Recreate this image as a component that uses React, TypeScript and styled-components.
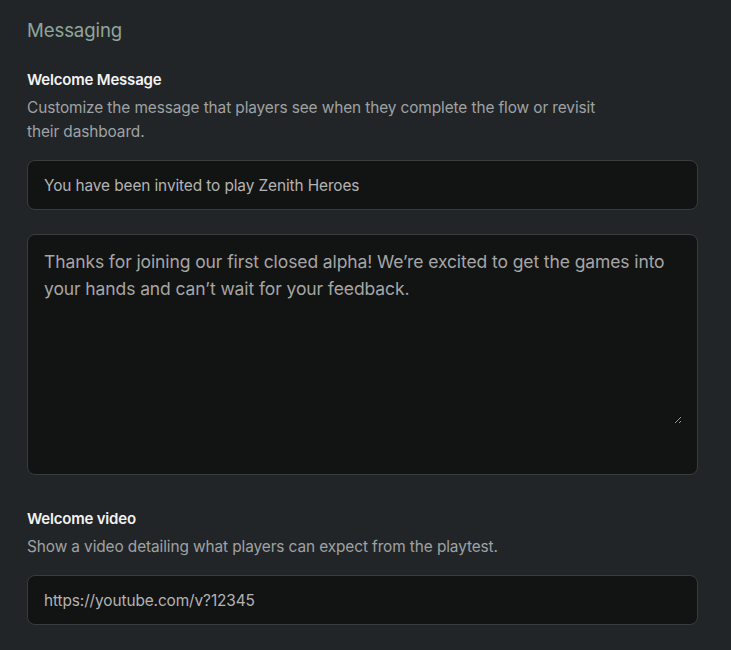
import React from "react";
import styled, { createGlobalStyle } from "styled-components";

const Global = createGlobalStyle`
  html, body { margin: 0; padding: 0; background: #222527; }
  body { font-family: Inter, "Noto Sans", sans-serif; -webkit-font-smoothing: antialiased; }
  * { box-sizing: border-box; }
`;

const Page = styled.div`
  width: 731px;
  min-height: 650px;
  background: #222527;
  padding: 18px 33px 0 27px;
  display: flex;
  flex-direction: column;
`;

const Heading = styled.h2`
  margin: 0;
  font-size: 18.6px;
  font-weight: 400;
  line-height: 24px;
  color: #8fa59b;
  letter-spacing: -0.1px;
`;

const Section = styled.section<{ $top: number }>`
  margin-top: ${(p) => p.$top}px;
  display: flex;
  flex-direction: column;
`;

const Label = styled.div`
  font-size: 15px;
  font-weight: 600;
  color: #f2f2f2;
  line-height: 20px;
  letter-spacing: -0.2px;
`;

const Description = styled.p`
  margin: 6px 0 0;
  max-width: 580px;
  font-size: 15.4px;
  line-height: 24px;
  color: #9fa2a4;
  letter-spacing: -0.1px;
`;

const Field = styled.div<{ $top: number }>`
  margin-top: ${(p) => p.$top}px;
  height: 50px;
  background: #121313;
  border: 1px solid #3a3d3f;
  border-radius: 8px;
  display: flex;
  align-items: center;
  padding: 0 16px;
`;

const Input = styled.input`
  flex: 1;
  background: transparent;
  border: none;
  outline: none;
  font-family: inherit;
  font-size: 15.4px;
  color: #b4b4b4;
  padding: 0;
  letter-spacing: -0.1px;
`;

const AreaBox = styled.div`
  margin-top: 24px;
  height: 241px;
  background: #121313;
  border: 1px solid #3a3d3f;
  border-radius: 8px;
  padding: 13px 15px 0 16px;
`;

const TextArea = styled.textarea`
  display: block;
  width: 100%;
  height: 176px;
  background: transparent;
  border: none;
  outline: none;
  padding: 0;
  font-family: inherit;
  font-size: 17.5px;
  line-height: 27px;
  color: #a6a6a6;
  resize: vertical;
  letter-spacing: -0.1px;
`;

export default function App() {
  return (
    <>
      <Global />
      <Page>
        <Heading>Messaging</Heading>
        <Section $top={28}>
          <Label>Welcome Message</Label>
          <Description>
            Customize the message that players see when they complete the flow or revisit their dashboard.
          </Description>
          <Field $top={16}>
            <Input defaultValue="You have been invited to play Zenith Heroes" />
          </Field>
          <AreaBox>
            <TextArea defaultValue={"Thanks for joining our first closed alpha! We\u2019re excited to get the games into your hands and can\u2019t wait for your feedback."} />
          </AreaBox>
        </Section>
        <Section $top={34}>
          <Label>Welcome video</Label>
          <Description>Show a video detailing what players can expect from the playtest.</Description>
          <Field $top={16}>
            <Input defaultValue="https://youtube.com/v?12345" />
          </Field>
        </Section>
      </Page>
    </>
  );
}
